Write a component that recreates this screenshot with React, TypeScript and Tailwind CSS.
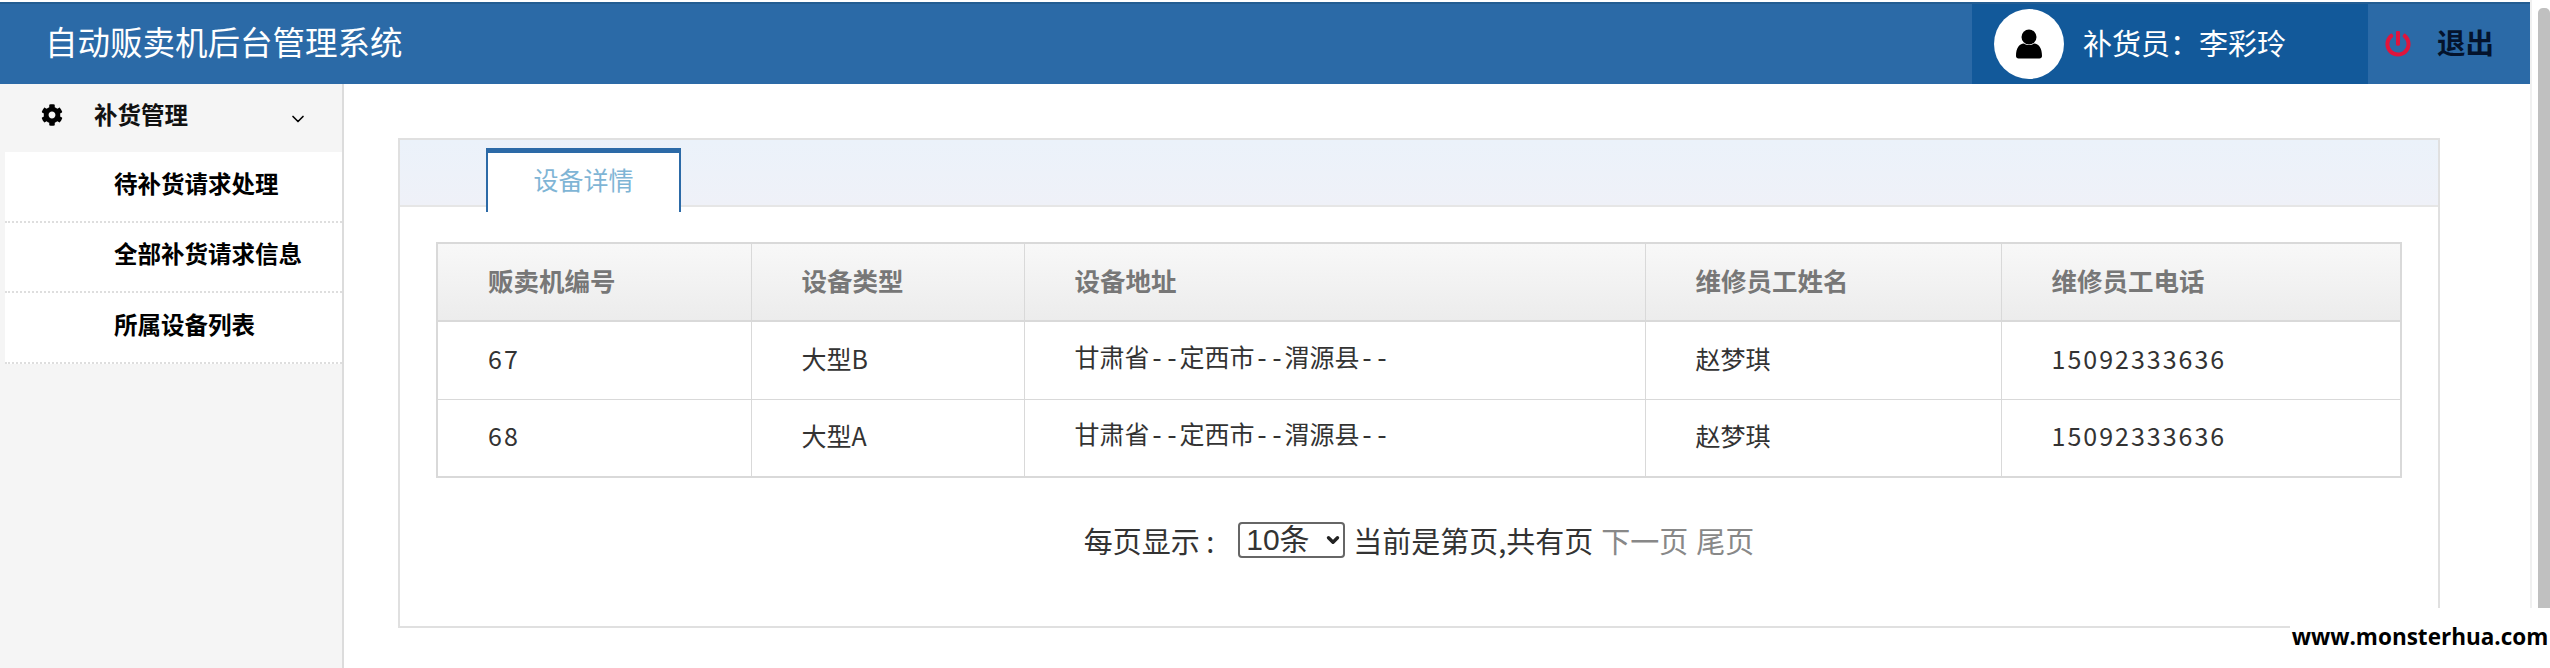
import React from "react";
import { FaCog, FaPowerOff } from "react-icons/fa";
import { ChevronDown } from "lucide-react";

const rows = [
  ["67", "大型B", "甘肃省|定西市|渭源县|", "赵梦琪", "15092333636"],
  ["68", "大型A", "甘肃省|定西市|渭源县|", "赵梦琪", "15092333636"],
];
const heads = ["贩卖机编号", "设备类型", "设备地址", "维修员工姓名", "维修员工电话"];
const items = ["待补货请求处理", "全部补货请求信息", "所属设备列表"];

function Cell({ text }: { text: string }) {
  if (!text.includes("|")) return <>{text}</>;
  const parts = text.split("|");
  return (
    <>
      {parts.map((p, i) => (
        <React.Fragment key={i}>
          {p}
          {i < parts.length - 1 && <span className="font-['Liberation_Mono',monospace]">--</span>}
        </React.Fragment>
      ))}
    </>
  );
}

export default function App() {
  return (
    <div className="relative flex h-[668px] w-[2550px] overflow-hidden bg-white font-['Noto_Sans_CJK_SC','Noto_Sans',sans-serif] text-[#333]">
      <div className="flex h-full w-[2530px] flex-col pt-[2px]">
        <header className="flex h-[82px] shrink-0 items-stretch justify-between border-t-2 border-[#235d92] bg-[#2b6aa7]">
          <div className="flex items-center pb-[6px] pl-[45px] text-[32.5px] leading-none text-white">自动贩卖机后台管理系统</div>
          <div className="flex items-stretch">
            <div className="flex w-[396px] items-center bg-[#12599a] pl-[22px]">
              <div className="flex h-[70px] w-[70px] items-center justify-center rounded-full bg-white">
                <svg viewBox="0 0 28 30" className="h-[30px] w-[28px]" fill="#000">
                  <circle cx="14" cy="8" r="7.5" />
                  <path d="M1 27c0-8 3-12 8-12.500 3 2 7 2 10 0 5 .5 8 4.500 8 12.500 0 1.500-1 2.500-2.500 2.500h-21C2 29.500 1 28.500 1 27z" />
                </svg>
              </div>
              <span className="ml-[19px] pb-[4px] text-[29px] leading-none text-white">补货员：李彩玲</span>
            </div>
            <div className="flex w-[162px] items-center pl-[17px]">
              <FaPowerOff className="h-[26px] w-[26px] text-[#e0143c]" />
              <span className="ml-[26px] pb-[4px] text-[28.500px] font-bold leading-none text-[#04132c]">退出</span>
            </div>
          </div>
        </header>
        <div className="flex min-h-0 flex-1">
          <aside className="w-[344px] shrink-0 border-r-2 border-[#dcdcdc] bg-[#f5f5f5]">
            <div className="flex h-[68px] items-center pb-[6px] pl-[41px] text-[#111]">
              <FaCog className="h-[22px] w-[22px] text-black" />
              <span className="ml-[31px] text-[23.500px] font-bold leading-none">补货管理</span>
              <ChevronDown className="ml-[100px] mt-[8px] h-[20px] w-[20px] text-black" strokeWidth={2} />
            </div>
            <ul className="pl-[5px]">
              {items.map((t) => (
                <li key={t} className="flex h-[70.5px] items-center border-b-2 border-dotted border-[#dedede] bg-white pb-[6px] pl-[109px] text-[23.500px] font-bold leading-none text-black">
                  {t}
                </li>
              ))}
            </ul>
          </aside>
          <main className="flex-1 pl-[54px] pr-[90px] pt-[54px]">
            <section className="h-[490px] border-2 border-[#e0e0e0]">
              <div className="h-[65px] bg-gradient-to-b from-[#ebf2fa] to-[#eff1f8] pl-[86px] pt-[8px]">
                <div className="relative z-10 flex h-[64px] w-[195px] items-center justify-center border-x-2 border-t-[5px] border-x-[#2c6aa7] border-t-[#2c6aa7] bg-white pb-[6px] text-[25px] leading-none text-[#7fb5d5]">
                  设备详情
                </div>
              </div>
              <div className="border-t-2 border-[#e6e6e6] px-[36px] pt-[35px]">
                <table className="w-[1964px] table-fixed border-collapse border-2 border-[#d9d9d9]">
                  <colgroup>
                    <col className="w-[314px]" />
                    <col className="w-[273px]" />
                    <col className="w-[621px]" />
                    <col className="w-[356px]" />
                    <col className="w-[400px]" />
                  </colgroup>
                  <thead>
                    <tr className="h-[78px] bg-gradient-to-b from-[#f8f8f8] to-[#ececec]">
                      {heads.map((h) => (
                        <th key={h} className="border-x border-b-2 border-[#d9d9d9] pb-[4px] pl-[50px] text-left text-[25.500px] font-bold leading-none text-[#777]">
                          {h}
                        </th>
                      ))}
                    </tr>
                  </thead>
                  <tbody>
                    {rows.map((r) => (
                      <tr key={r[0]} className="h-[78px]">
                        {r.map((c, i) => (
                          <td key={i} className={`border border-[#d9d9d9] pb-[4px] pl-[50px] text-[25px] leading-none text-[#333] ${i === 0 || i === 4 ? "tracking-[2px]" : ""}`}>
                            <Cell text={c} />
                          </td>
                        ))}
                      </tr>
                    ))}
                  </tbody>
                </table>
                <div className="mt-[44px] flex items-center justify-center text-[29px] leading-none text-[#333]">
                  <span className="whitespace-pre">每页显示 :</span>
                  <div className="relative ml-[24px] h-[36px] w-[107px]">
                    <select className="h-full w-full appearance-none rounded-[4px] border-2 border-[#666] bg-white pl-[6px] font-['Liberation_Sans','Noto_Sans_CJK_SC',sans-serif] text-[30px] leading-none text-[#333]" defaultValue="10">
                      <option value="10">10条</option>
                    </select>
                    <ChevronDown className="pointer-events-none absolute right-[3px] top-[9px] h-[18px] w-[18px] text-[#222]" strokeWidth={4.5} />
                  </div>
                  <span className="ml-[8px]">当前是第页,共有页</span>
                  <span className="ml-[8px] text-[#888]">下一页</span>
                  <span className="ml-[8px] text-[#888]">尾页</span>
                </div>
              </div>
            </section>
          </main>
        </div>
      </div>
      <div className="h-full w-[20px] border-l-2 border-[#f0f0f0] pl-[6px] pt-[8px]">
        <div className="h-full w-[12px] rounded-t-[5px] bg-[#c0c0c0]" />
      </div>
      <div className="absolute bottom-0 right-0 flex h-[60px] w-[260px] items-center justify-center bg-white pb-[2px] font-['Open_Sans',sans-serif] text-[22.500px] font-bold leading-none text-black">
        www.monsterhua.com
      </div>
    </div>
  );
}
